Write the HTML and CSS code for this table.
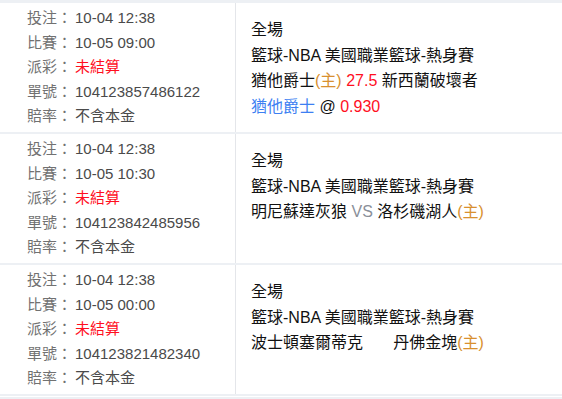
FILE: index.html
```html
<!DOCTYPE html>
<html lang="zh-Hant">
<head>
<meta charset="utf-8">
<link rel="stylesheet" href="styles.css">
</head>
<body>
<div class="list">
  <div class="row">
    <div class="info">
      <div class="line"><span class="lbl">投注：</span><span class="val">10-04 12:38</span></div>
      <div class="line"><span class="lbl">比賽：</span><span class="val">10-05 09:00</span></div>
      <div class="line"><span class="lbl">派彩：</span><span class="val red">未結算</span></div>
      <div class="line"><span class="lbl">單號：</span><span class="val">104123857486122</span></div>
      <div class="line"><span class="lbl">賠率：</span><span class="val">不含本金</span></div>
    </div>
    <div class="detail">
      <div class="dline">全場</div>
      <div class="dline">籃球-NBA 美國職業籃球-熱身賽</div>
      <div class="dline">猶他爵士<span class="home">(主)</span> <span class="red">27.5</span> 新西蘭破壞者</div>
      <div class="dline"><span class="blue">猶他爵士</span> @ <span class="red">0.930</span></div>
    </div>
  </div>
  <div class="row">
    <div class="info">
      <div class="line"><span class="lbl">投注：</span><span class="val">10-04 12:38</span></div>
      <div class="line"><span class="lbl">比賽：</span><span class="val">10-05 10:30</span></div>
      <div class="line"><span class="lbl">派彩：</span><span class="val red">未結算</span></div>
      <div class="line"><span class="lbl">單號：</span><span class="val">104123842485956</span></div>
      <div class="line"><span class="lbl">賠率：</span><span class="val">不含本金</span></div>
    </div>
    <div class="detail">
      <div class="dline">全場</div>
      <div class="dline">籃球-NBA 美國職業籃球-熱身賽</div>
      <div class="dline">明尼蘇達灰狼 <span class="vs">VS</span> 洛杉磯湖人<span class="home">(主)</span></div>
    </div>
  </div>
  <div class="row">
    <div class="info">
      <div class="line"><span class="lbl">投注：</span><span class="val">10-04 12:38</span></div>
      <div class="line"><span class="lbl">比賽：</span><span class="val">10-05 00:00</span></div>
      <div class="line"><span class="lbl">派彩：</span><span class="val red">未結算</span></div>
      <div class="line"><span class="lbl">單號：</span><span class="val">104123821482340</span></div>
      <div class="line"><span class="lbl">賠率：</span><span class="val">不含本金</span></div>
    </div>
    <div class="detail">
      <div class="dline">全場</div>
      <div class="dline">籃球-NBA 美國職業籃球-熱身賽</div>
      <div class="dline">波士頓塞爾蒂克 <span class="hidden-vs">VS</span> 丹佛金塊<span class="home">(主)</span></div>
    </div>
  </div>
  <div class="tail"></div>
</div>
</body>
</html>
```
FILE: styles.css
```css
html, body {
  margin: 0;
  padding: 0;
  background: #edf0f4;
}
body {
  font-family: "Liberation Sans", "Noto Sans CJK TC", sans-serif;
  width: 562px;
  height: 399px;
  overflow: hidden;
}
.list {
  padding-top: 3px;
  display: flex;
  flex-direction: column;
  gap: 2px;
}
.row {
  display: flex;
  background: #fff;
  height: 129px;
  flex-shrink: 0;
}
.tail {
  height: 1px;
  background: #fff;
}
.info {
  width: 208px;
  padding: 3px 0 3px 27px;
  border-right: 1px solid #e4e6ea;
  font-size: 15px;
  flex-shrink: 0;
}
.line {
  line-height: 24.6px;
  white-space: nowrap;
}
.lbl {
  color: #717171;
  display: inline-block;
  width: 48px;
}
.val {
  color: #4a4a4a;
}
.detail {
  padding: 14px 0 0 15px;
  font-size: 16px;
  color: #111;
}
.dline {
  line-height: 25.5px;
  white-space: nowrap;
}
.red { color: #ff0f1f; }
.home { color: #d8902f; }
.blue { color: #3d7ff2; }
.vs { color: #8a8f99; }
.hidden-vs { color: #fff; }
```
